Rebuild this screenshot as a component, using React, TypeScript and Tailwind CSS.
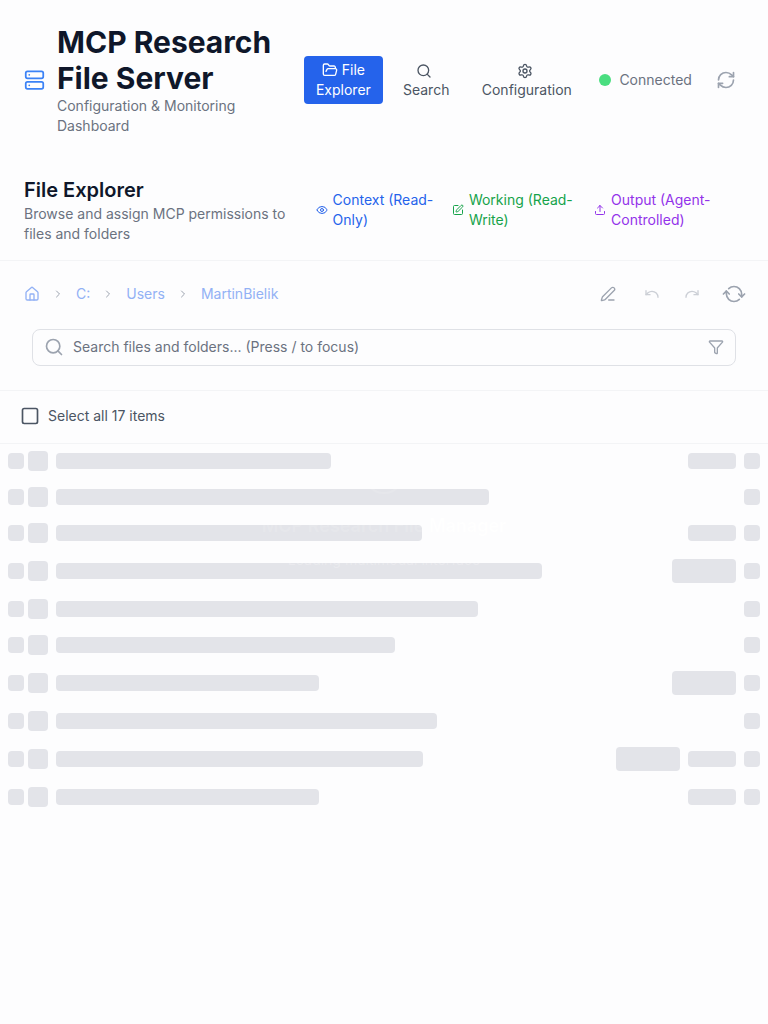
import type { ReactNode } from "react";
import {
  ChevronRight, Eye, FolderOpen, Funnel, House, PenLine, Redo, RefreshCw,
  Search, Server, Settings, Square, SquarePen, Undo, Upload,
} from "lucide-react";

type Row = { width: number; pad: string; badge?: boolean; meta?: boolean };

const rows: Row[] = [
  { width: 275.4, pad: "h-9", meta: true },
  { width: 433, pad: "h-9" },
  { width: 366, pad: "h-9", meta: true },
  { width: 486, pad: "h-10", badge: true },
  { width: 422, pad: "h-9" },
  { width: 339.4, pad: "h-9" },
  { width: 263.4, pad: "h-10", badge: true },
  { width: 380.7, pad: "h-9" },
  { width: 367.4, pad: "h-10", badge: true, meta: true },
  { width: 263.4, pad: "h-9", meta: true },
];

function SkeletonRow({ row }: { row: Row }) {
  return (
    <div className={`flex items-center px-2 ${row.pad}`}>
      <div className="h-4 w-4 rounded bg-[#e3e4e9]" />
      <div className="ml-1 h-5 w-5 rounded bg-[#e3e4e9]" />
      <div className="ml-2 h-4 rounded bg-[#e3e4e9]" style={{ width: row.width }} />
      <div className="ml-auto flex items-center gap-2">
        {row.badge && <div className="h-6 w-16 rounded bg-[#e3e4e9]" />}
        {row.meta && <div className="h-4 w-12 rounded bg-[#e3e4e9]" />}
        <div className="h-4 w-4 rounded bg-[#e3e4e9]" />
      </div>
    </div>
  );
}

function Legend({ icon, color, children }: { icon: ReactNode; color: string; children: ReactNode }) {
  return (
    <div className={`flex items-center gap-[4.6px] ${color}`}>
      {icon}
      <span>{children}</span>
    </div>
  );
}

export default function App() {
  return (
    <div className="relative h-[1024px] w-[768px] overflow-hidden bg-[#fdfdfe] font-['Inter',sans-serif] text-sm text-[#6b7280]">
      <header className="flex h-40 items-center pl-6">
        <Server className="h-6 w-[21px] shrink-0 text-[#3b82f6]" />
        <div className="ml-3 w-[247px] shrink-0">
          <h1 className="w-[230px] text-[30px] leading-9 font-bold text-[#0f172a]">MCP Research File Server</h1>
          <p className="w-[200px]">Configuration &amp; Monitoring Dashboard</p>
        </div>
        <nav className="flex shrink-0 text-center text-[#4b5563]">
          <div className="h-12 w-[78.8px] rounded bg-[#2563eb] py-1 text-white">
            <div className="flex items-center justify-center gap-1"><FolderOpen size={16} />File</div>
            <div>Explorer</div>
          </div>
          <div className="ml-2 w-[70.8px] py-1">
            <div className="flex h-5 items-center justify-center pt-px pr-1"><Search size={16} /></div>
            <div>Search</div>
          </div>
          <div className="ml-2 w-[114.4px] py-1">
            <div className="flex h-5 items-center justify-center pt-px pr-1"><Settings size={16} /></div>
            <div>Configuration</div>
          </div>
        </nav>
        <div className="ml-[15.4px] h-3 w-3 rounded-full bg-[#4ade80]" />
        <span className="ml-2">Connected</span>
        <RefreshCw size={20} className="ml-6 text-[#9ca3af]" />
      </header>

      <section className="flex h-[101px] items-center border-b border-[#f3f4f6] pl-6">
        <div className="w-[292px] shrink-0">
          <h2 className="text-xl leading-7 font-semibold text-[#0f172a]">File Explorer</h2>
          <p className="w-[270px]">Browse and assign MCP permissions to files and folders</p>
        </div>
        <Legend color="w-[136.3px] text-[#2563eb]" icon={<Eye size={12} className="shrink-0" />}>Context (Read-<br />Only)</Legend>
        <Legend color="w-[142.2px] text-[#16a34a]" icon={<SquarePen size={12} className="shrink-0" />}>Working (Read-<br />Write)</Legend>
        <Legend color="text-[#9333ea]" icon={<Upload size={12} className="shrink-0" />}>Output (Agent-<br />Controlled)</Legend>
      </section>

      <section className="h-[130px] border-b border-[#f3f4f6]">
        <div className="flex h-[67px] items-center pr-6 pb-px pl-6 text-[#92b1f5]">
          <House size={16} />
          <ChevronRight size={12} className="ml-3 text-[#9ca3af]" />
          <span className="ml-3">C:</span>
          <ChevronRight size={12} className="ml-3 text-[#9ca3af]" />
          <span className="ml-3">Users</span>
          <ChevronRight size={12} className="ml-3 text-[#9ca3af]" />
          <span className="ml-3">MartinBielik</span>
          <div className="ml-auto flex items-center text-[#9ca3af]">
            <PenLine size={16} />
            <Undo size={16} className="ml-7 opacity-50" />
            <Redo size={16} className="ml-6 opacity-50" />
            <RefreshCw size={20} className="ml-6 rotate-45" />
          </div>
        </div>
        <div className="mx-8 mt-px flex h-[37px] items-center rounded-lg border border-[#dfe1e6] px-[11px] pb-px">
          <Search size={20} className="text-[#9ca3af]" />
          <span className="ml-[9px]">Search files and folders... (Press / to focus)</span>
          <Funnel size={16} className="ml-auto text-[#9ca3af]" />
        </div>
      </section>

      <section className="flex h-[53px] items-center border-b border-[#f3f4f6] pb-[2px] pl-5 text-[#4b5563]">
        <Square size={20} />
        <span className="ml-2">Select all 17 items</span>
      </section>

      <main className="-mt-px">
        {rows.map((row, index) => <SkeletonRow key={index} row={row} />)}
      </main>

      <div className="pointer-events-none absolute inset-x-0 top-[454px] flex flex-col items-center text-white/15">
        <div className="h-10 w-10 rounded-full border-2 border-white/10" />
        <div className="mt-4 text-lg leading-8 font-semibold">MCP Research File <span className="text-white">Manager</span></div>
        <div className="mt-2 text-white/25">Loading multimodal interface</div>
      </div>
    </div>
  );
}
